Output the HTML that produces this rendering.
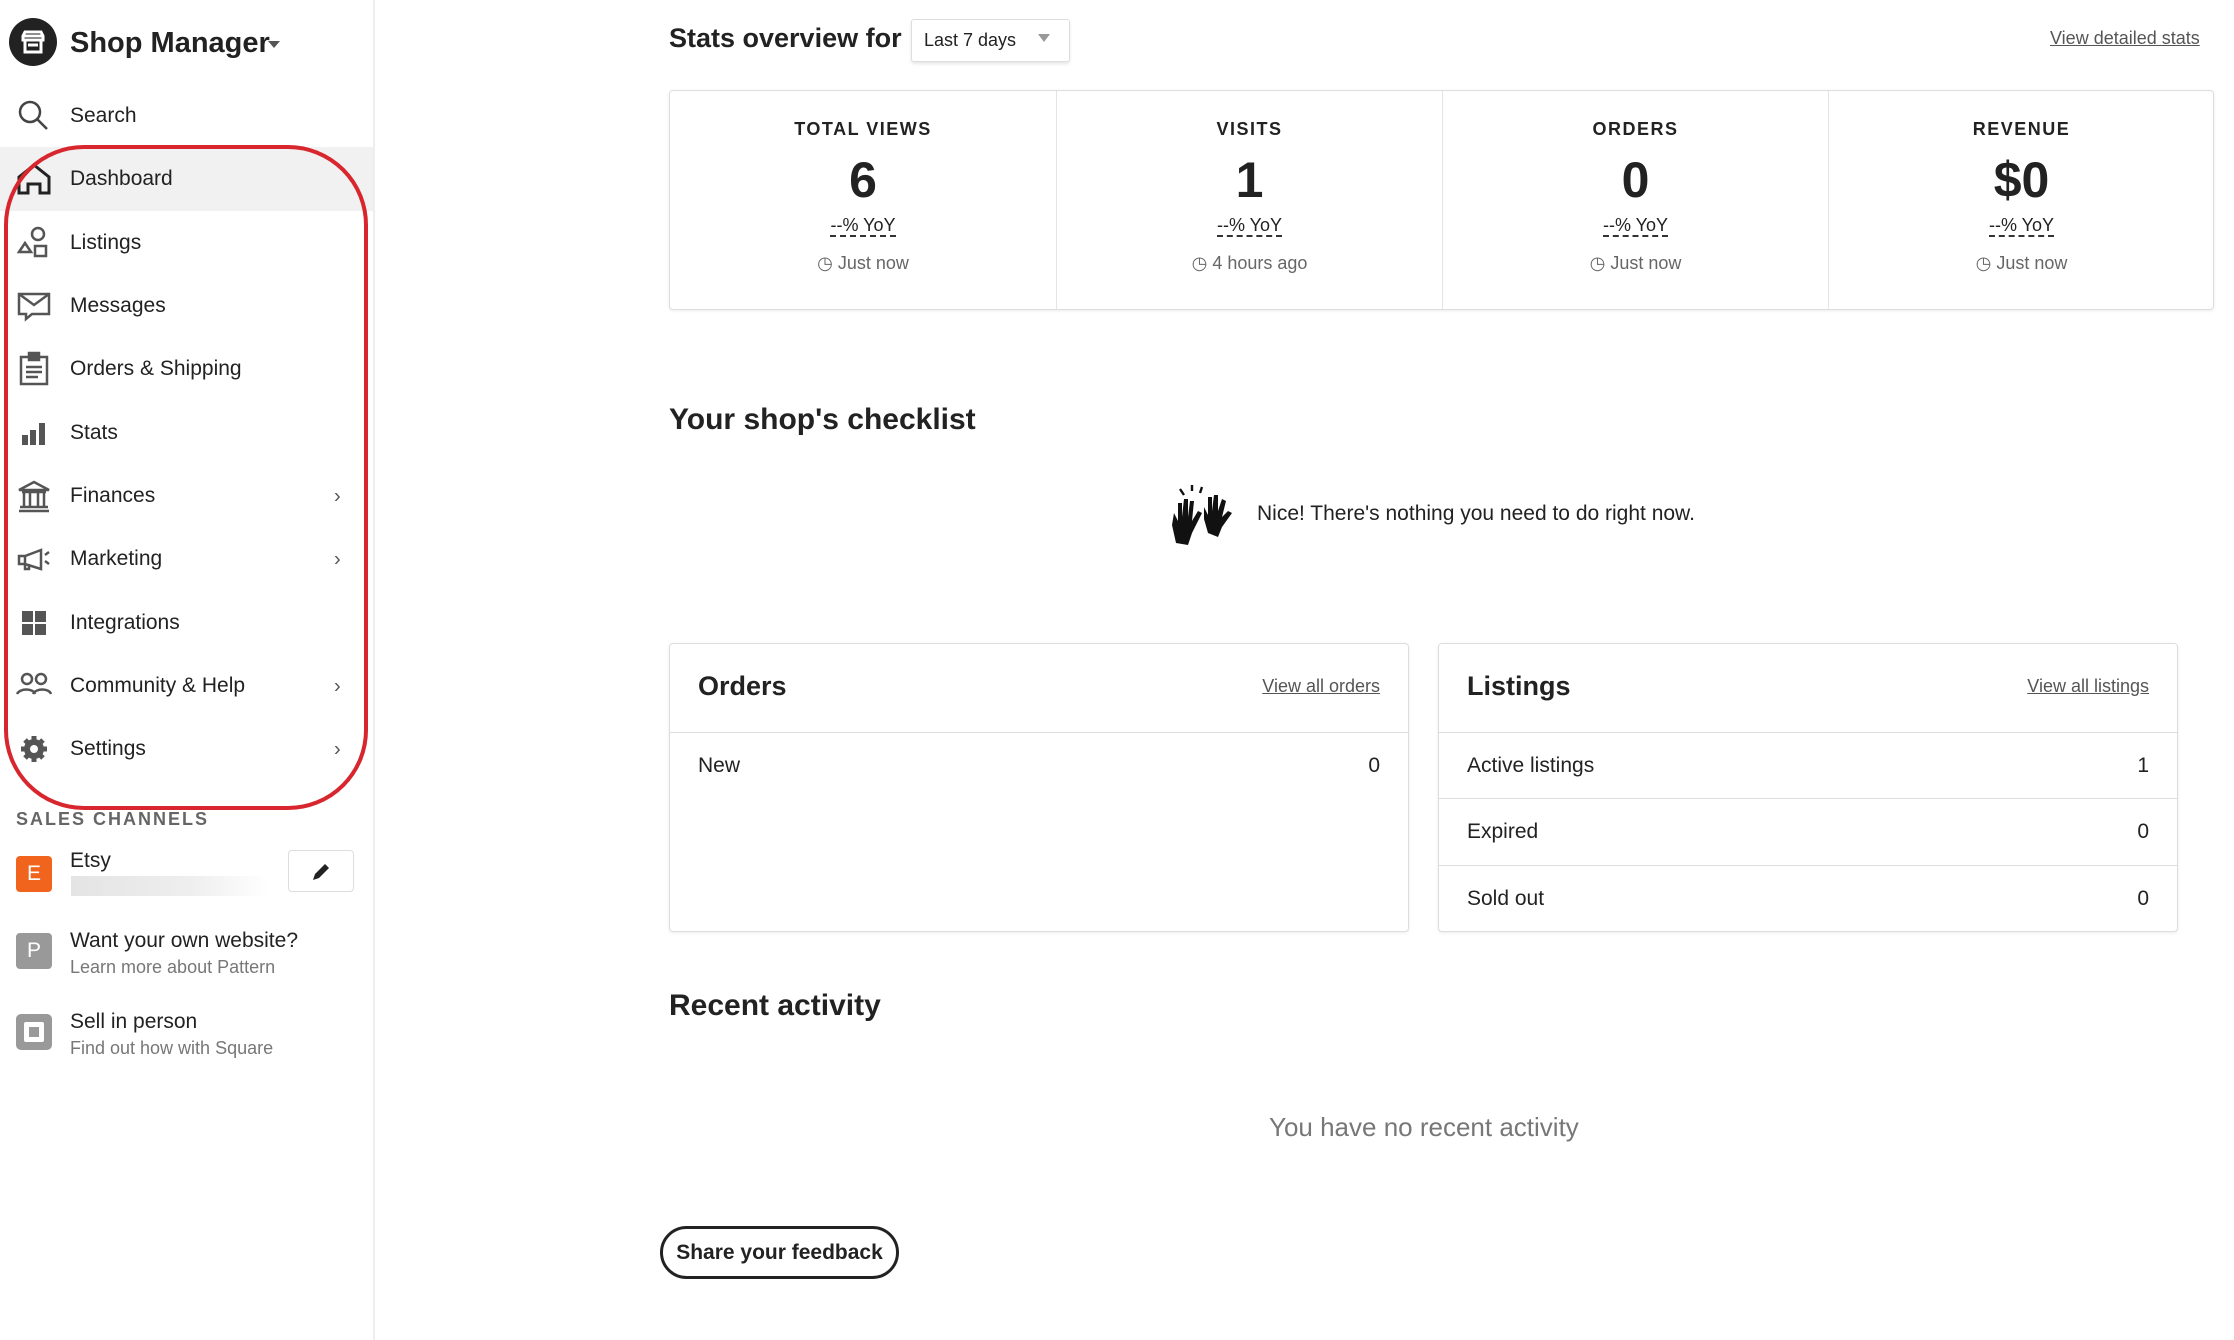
<!DOCTYPE html>
<html><head><meta charset="utf-8"><style>
*{margin:0;padding:0;box-sizing:border-box}
body{width:2234px;height:1340px;overflow:hidden;background:#fff;font-family:"Liberation Sans",sans-serif;color:#222;position:relative}
.a{position:absolute;white-space:nowrap}
.side{position:absolute;left:0;top:0;width:375px;height:1340px;border-right:2px solid #eee}
.nav{position:absolute;left:70px;font-size:21px;color:#222;transform:translateY(-50%)}
.ic{position:absolute;left:16px;width:36px;height:36px;transform:translateY(-50%)}
.chev{position:absolute;left:334px;font-size:20px;color:#555;transform:translateY(-50%)}
.lbl{font-size:18px;letter-spacing:1.5px;font-weight:bold;color:#222}
.col{position:absolute;top:0;width:386px;height:219px;text-align:center}
.col + .col{border-left:1px solid #e4e4e4}
.num{position:absolute;top:60px;left:0;right:0;font-size:50px;font-weight:bold}
.yoy{position:absolute;top:124px;left:0;right:0;font-size:18px}
.yoy span{border-bottom:2px dashed #333}
.tm{position:absolute;top:162px;left:0;right:0;font-size:18px;color:#666}
.card{position:absolute;border:1px solid #ddd;border-radius:4px;box-shadow:0 1px 3px rgba(0,0,0,.08)}
.row{position:absolute;left:0;right:0;font-size:21px}
</style></head><body>
<div class="side">
  <div class="a" style="left:9px;top:18px;width:48px;height:48px;border-radius:50%;background:#222"></div>
  <svg class="a" style="left:19px;top:28px" width="28" height="28" viewBox="0 0 28 28" fill="none" stroke="#fff" stroke-width="3"><path d="M4 8h20M6 4h16l2 4v4H4V8zM6 12v12h16V12M9 17h10"/></svg>
  <div class="a" style="left:70px;top:27px;font-size:29px;font-weight:bold">Shop Manager</div>
  <div class="a" style="left:268px;top:41px;border:6px solid transparent;border-top:7px solid #555"></div>

  <svg class="ic" style="top:116px" viewBox="0 0 36 36" fill="none" stroke="#444" stroke-width="2.5"><circle cx="14" cy="14" r="10"/><path d="M21 21l10 10"/></svg>
  <div class="nav" style="top:116px">Search</div>

  <div class="a" style="left:0;top:147px;width:373px;height:64px;background:#f1f1f1"></div>
  <svg class="ic" style="top:179px" viewBox="0 0 36 36" fill="none" stroke="#222" stroke-width="3"><path d="M3 16L18 4l15 12v16H24v-9H12v9H3z"/></svg>
  <div class="nav" style="top:179px">Dashboard</div>

  <svg class="ic" style="top:243px" viewBox="0 0 36 36" fill="none" stroke="#555" stroke-width="2.5"><circle cx="22" cy="9" r="6"/><path d="M3 27l6-9 6 9z"/><rect x="19" y="21" width="11" height="10"/></svg>
  <div class="nav" style="top:243px">Listings</div>

  <svg class="ic" style="top:306px" viewBox="0 0 36 36" fill="none" stroke="#555" stroke-width="2.5"><path d="M3 6h30v20H16l-6 5v-5H3z"/><path d="M3 6l15 11 15-11"/></svg>
  <div class="nav" style="top:306px">Messages</div>

  <svg class="ic" style="top:369px" viewBox="0 0 36 36" fill="none" stroke="#555" stroke-width="2.5"><rect x="5" y="6" width="26" height="27"/><rect x="13" y="2" width="10" height="7" fill="#555"/><path d="M10 16h16M10 21h16M10 26h12"/></svg>
  <div class="nav" style="top:369px">Orders &amp; Shipping</div>

  <svg class="ic" style="top:433px" viewBox="0 0 36 36" fill="#555"><rect x="6" y="20" width="6" height="10"/><rect x="14" y="15" width="6" height="15"/><rect x="23" y="8" width="6" height="22"/></svg>
  <div class="nav" style="top:433px">Stats</div>

  <svg class="ic" style="top:496px" viewBox="0 0 36 36" fill="none" stroke="#555" stroke-width="2.5"><path d="M3 12L18 4l15 8zM6 14h24M8 15v13M14 15v13M22 15v13M28 15v13M4 29h28M3 33h30"/></svg>
  <div class="nav" style="top:496px">Finances</div><div class="chev" style="top:497px">›</div>

  <svg class="ic" style="top:559px" viewBox="0 0 36 36" fill="none" stroke="#555" stroke-width="2.5"><path d="M3 15h6l16-6v19L9 23H3zM9 15v13h4v-5M29 14l4-3M29 20l4 3"/></svg>
  <div class="nav" style="top:559px">Marketing</div><div class="chev" style="top:560px">›</div>

  <svg class="ic" style="top:623px" viewBox="0 0 36 36" fill="#555"><rect x="6" y="6" width="11" height="11"/><rect x="19" y="6" width="11" height="11"/><rect x="6" y="19" width="11" height="11"/><rect x="19" y="19" width="11" height="11"/></svg>
  <div class="nav" style="top:623px">Integrations</div>

  <svg class="ic" style="top:686px" viewBox="0 0 36 36" fill="none" stroke="#555" stroke-width="2.5"><circle cx="11" cy="11" r="5"/><circle cx="25" cy="11" r="5"/><path d="M1 26c3-6 16-6 18 0M17 26c3-6 16-6 18 0"/></svg>
  <div class="nav" style="top:686px">Community &amp; Help</div><div class="chev" style="top:687px">›</div>

  <svg class="ic" style="top:749px" viewBox="0 0 36 36" fill="#555"><circle cx="18" cy="18" r="10"/><g stroke="#555" stroke-width="5"><path d="M18 5v26M5 18h26M9 9l18 18M27 9L9 27"/></g><circle cx="18" cy="18" r="4" fill="#fff"/></svg>
  <div class="nav" style="top:749px">Settings</div><div class="chev" style="top:750px">›</div>

  <div class="a" style="left:4px;top:145px;width:364px;height:665px;border:4px solid #d8262e;border-radius:80px"></div>

  <div class="a" style="left:16px;top:809px;font-size:18px;letter-spacing:2px;color:#666;font-weight:bold">SALES CHANNELS</div>

  <div class="a" style="left:16px;top:856px;width:36px;height:36px;border-radius:4px;background:#f1641e;color:#fff;font-size:21px;text-align:center;line-height:36px">E</div>
  <div class="a" style="left:70px;top:849px;font-size:21px">Etsy</div>
  <div class="a" style="left:71px;top:876px;width:198px;height:20px;background:linear-gradient(90deg,#e4e4e4,#eee 60%,#fff)"></div>
  <div class="a" style="left:288px;top:850px;width:66px;height:42px;border:1px solid #ddd;border-radius:4px"></div>
  <svg class="a" style="left:310px;top:861px" width="22" height="22" viewBox="0 0 22 22"><path d="M3 19l2-6L15 3l4 4L9 17z" fill="#222"/></svg>

  <div class="a" style="left:16px;top:933px;width:36px;height:36px;border-radius:4px;background:#999;color:#fff;font-size:21px;text-align:center;line-height:36px">P</div>
  <div class="a" style="left:70px;top:929px;font-size:21px">Want your own website?</div>
  <div class="a" style="left:70px;top:957px;font-size:18px;color:#777">Learn more about Pattern</div>

  <div class="a" style="left:16px;top:1014px;width:36px;height:36px;border-radius:5px;background:#999"></div>
  <div class="a" style="left:24px;top:1022px;width:20px;height:20px;border-radius:2px;background:#fff"></div>
  <div class="a" style="left:29px;top:1027px;width:10px;height:10px;background:#999"></div>
  <div class="a" style="left:70px;top:1010px;font-size:21px">Sell in person</div>
  <div class="a" style="left:70px;top:1038px;font-size:18px;color:#777">Find out how with Square</div>
</div>

<div class="a" style="left:669px;top:23px;font-size:27px;font-weight:bold;color:#222">Stats overview for</div>
<div class="a" style="left:911px;top:19px;width:159px;height:43px;border:1px solid #ddd;border-radius:3px;box-shadow:0 2px 3px rgba(0,0,0,.1)"></div>
<div class="a" style="left:924px;top:30px;font-size:18px">Last 7 days</div>
<div class="a" style="left:1038px;top:34px;border:6px solid transparent;border-top:8px solid #999"></div>
<div class="a" style="left:2050px;top:28px;font-size:18px;color:#555;text-decoration:underline">View detailed stats</div>

<div class="card" style="left:669px;top:90px;width:1545px;height:220px">
  <div class="col" style="left:0"><div class="a lbl" style="left:0;right:0;top:28px">TOTAL VIEWS</div><div class="num">6</div><div class="yoy"><span>--% YoY</span></div><div class="tm">◷ Just now</div></div>
  <div class="col" style="left:386px"><div class="a lbl" style="left:0;right:0;top:28px">VISITS</div><div class="num">1</div><div class="yoy"><span>--% YoY</span></div><div class="tm">◷ 4 hours ago</div></div>
  <div class="col" style="left:772px"><div class="a lbl" style="left:0;right:0;top:28px">ORDERS</div><div class="num">0</div><div class="yoy"><span>--% YoY</span></div><div class="tm">◷ Just now</div></div>
  <div class="col" style="left:1158px"><div class="a lbl" style="left:0;right:0;top:28px">REVENUE</div><div class="num">$0</div><div class="yoy"><span>--% YoY</span></div><div class="tm">◷ Just now</div></div>
</div>

<div class="a" style="left:669px;top:403px;font-size:30px;font-weight:bold">Your shop's checklist</div>
<svg class="a" style="left:1168px;top:480px" width="66" height="66" viewBox="0 0 33 30" fill="#111"><path d="M4 30l-2-9 1-6 2 4V10l2 0v7l1-9h2v9l1-8h2l-1 10 3-5 2 1-5 10-2 6z"/><path d="M20 25l-2-7 0-6 2 4V7l2 0v7l1-8h2l-0 8 2-6 2 1-2 8 3-3 2 1-5 7-2 5z"/><path d="M6 3l2 3M12 1v3M17 2l-1 3" stroke="#111" stroke-width="1.2"/></svg>
<div class="a" style="left:1257px;top:502px;font-size:21px">Nice! There's nothing you need to do right now.</div>

<div class="card" style="left:669px;top:643px;width:740px;height:289px">
  <div class="a" style="left:28px;top:27px;font-size:27px;font-weight:bold">Orders</div>
  <div class="a" style="right:28px;top:32px;font-size:18px;color:#555;text-decoration:underline">View all orders</div>
  <div class="a" style="left:0;right:0;top:88px;border-top:1px solid #ddd"></div>
  <div class="row" style="top:110px;padding:0 28px"><span>New</span><span style="float:right">0</span></div>
</div>

<div class="card" style="left:1438px;top:643px;width:740px;height:289px">
  <div class="a" style="left:28px;top:27px;font-size:27px;font-weight:bold">Listings</div>
  <div class="a" style="right:28px;top:32px;font-size:18px;color:#555;text-decoration:underline">View all listings</div>
  <div class="a" style="left:0;right:0;top:88px;border-top:1px solid #ddd"></div>
  <div class="row" style="top:110px;padding:0 28px"><span>Active listings</span><span style="float:right">1</span></div>
  <div class="a" style="left:0;right:0;top:154px;border-top:1px solid #ddd"></div>
  <div class="row" style="top:176px;padding:0 28px"><span>Expired</span><span style="float:right">0</span></div>
  <div class="a" style="left:0;right:0;top:221px;border-top:1px solid #ddd"></div>
  <div class="row" style="top:243px;padding:0 28px"><span>Sold out</span><span style="float:right">0</span></div>
</div>

<div class="a" style="left:669px;top:989px;font-size:30px;font-weight:bold">Recent activity</div>
<div class="a" style="left:1269px;top:1112px;font-size:26px;color:#777">You have no recent activity</div>

<div class="a" style="left:660px;top:1226px;width:239px;height:53px;border:3px solid #222;border-radius:27px;font-size:21px;font-weight:bold;text-align:center;line-height:47px">Share your feedback</div>
</body></html>
